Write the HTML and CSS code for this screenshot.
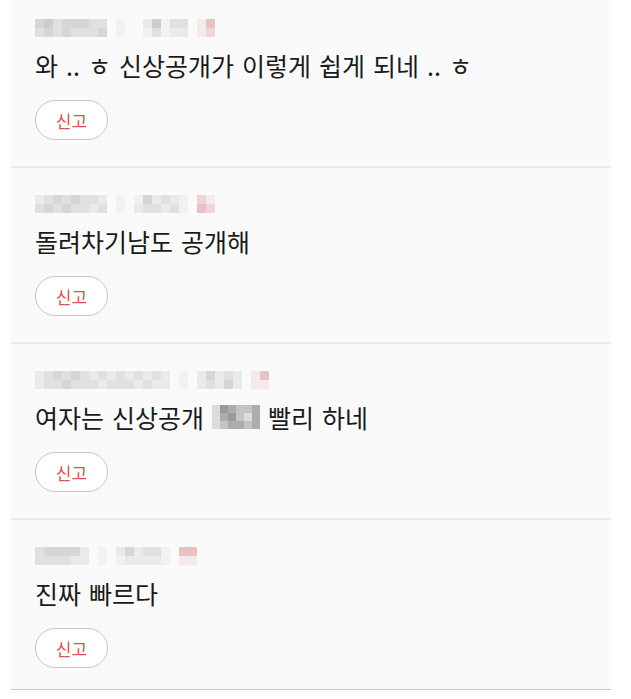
FILE: index.html
```html
<!DOCTYPE html>
<html lang="ko">
<head>
<meta charset="utf-8">
<title>댓글</title>
<link rel="stylesheet" href="styles.css">
</head>
<body>
<div class="panel">
  <ul class="list">
    <li class="item">
      <div class="meta" aria-hidden="true">
        <i class="g2"></i><i class="g3"></i>
        <i class="g1"></i><i class="g2"></i>
        <i class="g3"></i><i class="g3"></i>
        <i class="g2"></i><i class="g2"></i>
        <i class="g2"></i><i class="g3"></i>
        <i class="g2"></i><i class="g3"></i>
        <i class="g3"></i><i class="g3"></i>
        <i class="g3"></i><i class="g2"></i>
        <i></i><i></i>
        <i class="g5"></i><i class="g5"></i>
        <i></i><i></i>
        <i></i><i></i>
        <i class="g4"></i><i class="g5"></i>
        <i class="g1"></i><i class="g3"></i>
        <i class="g5"></i><i class="g5"></i>
        <i class="g3"></i><i class="g4"></i>
        <i class="g3"></i><i class="g4"></i>
        <i></i><i></i>
        <i class="p3"></i><i class="p3"></i>
        <i class="p1"></i><i class="p2"></i>
      </div>
      <p class="text">와 .. ㅎ 신상공개가 이렇게 쉽게 되네 .. ㅎ</p>
      <button class="report">신고</button>
    </li>
    <li class="item">
      <div class="meta" aria-hidden="true">
        <i class="g4"></i><i class="g3"></i>
        <i class="g3"></i><i class="g2"></i>
        <i class="g2"></i><i class="g3"></i>
        <i class="g3"></i><i class="g2"></i>
        <i class="g2"></i><i class="g3"></i>
        <i class="g3"></i><i class="g3"></i>
        <i class="g3"></i><i class="g4"></i>
        <i class="g4"></i><i class="g3"></i>
        <i></i><i></i>
        <i class="g5"></i><i class="g5"></i>
        <i></i><i></i>
        <i class="g5"></i><i class="g4"></i>
        <i class="g2"></i><i class="g3"></i>
        <i class="g4"></i><i class="g3"></i>
        <i class="g3"></i><i class="g4"></i>
        <i class="g4"></i><i class="g3"></i>
        <i class="g5"></i><i class="g5"></i>
        <i></i><i></i>
        <i class="p2"></i><i class="p1"></i>
        <i class="p3"></i><i class="p2"></i>
      </div>
      <p class="text">돌려차기남도 공개해</p>
      <button class="report">신고</button>
    </li>
    <li class="item">
      <div class="meta" aria-hidden="true">
        <i class="g4"></i><i class="g4"></i>
        <i class="g3"></i><i class="g3"></i>
        <i class="g2"></i><i class="g3"></i>
        <i class="g3"></i><i class="g2"></i>
        <i class="g2"></i><i class="g3"></i>
        <i class="g3"></i><i class="g3"></i>
        <i class="g4"></i><i class="g3"></i>
        <i class="g3"></i><i class="g4"></i>
        <i class="g4"></i><i class="g3"></i>
        <i class="g3"></i><i class="g3"></i>
        <i class="g4"></i><i class="g3"></i>
        <i class="g3"></i><i class="g4"></i>
        <i class="g4"></i><i class="g3"></i>
        <i class="g3"></i><i class="g4"></i>
        <i class="g4"></i><i class="g4"></i>
        <i></i><i></i>
        <i class="g5"></i><i class="g5"></i>
        <i></i><i></i>
        <i class="g4"></i><i class="g4"></i>
        <i class="g2"></i><i class="g3"></i>
        <i class="g4"></i><i class="g4"></i>
        <i class="g3"></i><i class="g2"></i>
        <i class="g4"></i><i class="g4"></i>
        <i></i><i></i>
        <i class="p3"></i><i class="p3"></i>
        <i class="p1"></i><i class="p3"></i>
      </div>
      <p class="text">여자는 신상공개 <span class="censor" aria-label="가림"><span class="censor-grid"><i class="c4"></i><i class="c1"></i><i class="c2"></i><i class="c3"></i><i class="c3"></i><i class="c2"></i><i class="c4"></i><i class="c2"></i><i class="c1"></i><i class="c3"></i><i class="c4"></i><i class="c2"></i><i class="c4"></i><i class="c3"></i><i class="c2"></i><i class="c2"></i><i class="c3"></i><i class="c2"></i></span></span> 빨리 하네</p>
      <button class="report">신고</button>
    </li>
    <li class="item last">
      <div class="meta" aria-hidden="true">
        <i class="g3"></i><i class="g3"></i>
        <i class="g2"></i><i class="g3"></i>
        <i class="g2"></i><i class="g3"></i>
        <i class="g2"></i><i class="g3"></i>
        <i class="g2"></i><i class="g4"></i>
        <i class="g4"></i><i class="g4"></i>
        <i></i><i></i>
        <i class="g5"></i><i class="g5"></i>
        <i></i><i></i>
        <i class="g4"></i><i class="g5"></i>
        <i class="g2"></i><i class="g4"></i>
        <i class="g4"></i><i class="g4"></i>
        <i class="g3"></i><i class="g4"></i>
        <i class="g3"></i><i class="g4"></i>
        <i class="g5"></i><i class="g5"></i>
        <i></i><i></i>
        <i class="p1"></i><i class="p3"></i>
        <i class="p1"></i><i class="p3"></i>
      </div>
      <p class="text">진짜 빠르다</p>
      <button class="report">신고</button>
    </li>
  </ul>
</div>
</body>
</html>
```

FILE: styles.css
```css
* { box-sizing: border-box; }

html, body {
  margin: 0;
  padding: 0;
  background: #ffffff;
}

body {
  font-family: "Noto Sans CJK KR", "Noto Sans", sans-serif;
  color: #1a1a1a;
  overflow: hidden;
}

.panel {
  width: 600px;
  margin-left: 11px;
}

.list {
  list-style: none;
  margin: -8px 0 0;
  padding: 0;
}

.item {
  background: #fafafa;
  padding: 27px 24px 26px;
  border-bottom: 2px solid #ebebeb;
  display: flex;
  flex-direction: column;
  align-items: flex-start;
}

.item.last {
  padding-bottom: 21px;
  border-bottom: 1px solid #c9c9c9;
}

.meta {
  display: grid;
  grid-auto-flow: column;
  grid-template-rows: 9px 9px;
  grid-auto-columns: 9px;
  height: 18px;
}

.meta i { display: block; }

.g1 { background: #cdcdcd; }
.g2 { background: #d6d6d6; }
.g3 { background: #e0e0e0; }
.g4 { background: #eaeaea; }
.g5 { background: #f2f2f2; }
.p1 { background: #e8c1c3; }
.p2 { background: #efd6d6; }
.p3 { background: #f4eaea; }

.text {
  margin: 11px 0 0;
  font-size: 25px;
  line-height: 34px;
  word-spacing: 1px;
  white-space: nowrap;
}

.censor {
  display: inline-block;
  overflow: hidden;
  width: 48px;
  height: 24px;
  vertical-align: -1px;
}

.censor-grid {
  display: grid;
  grid-template-columns: repeat(6, 8px);
  grid-template-rows: repeat(3, 8px);
}

.censor-grid i { display: block; }
.c1 { background: #9a9a9a; }
.c2 { background: #adadad; }
.c3 { background: #c4c4c4; }
.c4 { background: #dcdcdc; }

.report {
  margin-top: 18px;
  width: 73px;
  height: 40px;
  border: 1px solid #c6c6c6;
  border-radius: 20px;
  background: #ffffff;
  color: #d9514b;
  font-family: "Noto Sans CJK KR", "Noto Sans", sans-serif;
  font-size: 17px;
  line-height: 1;
  padding: 0;
}
```
